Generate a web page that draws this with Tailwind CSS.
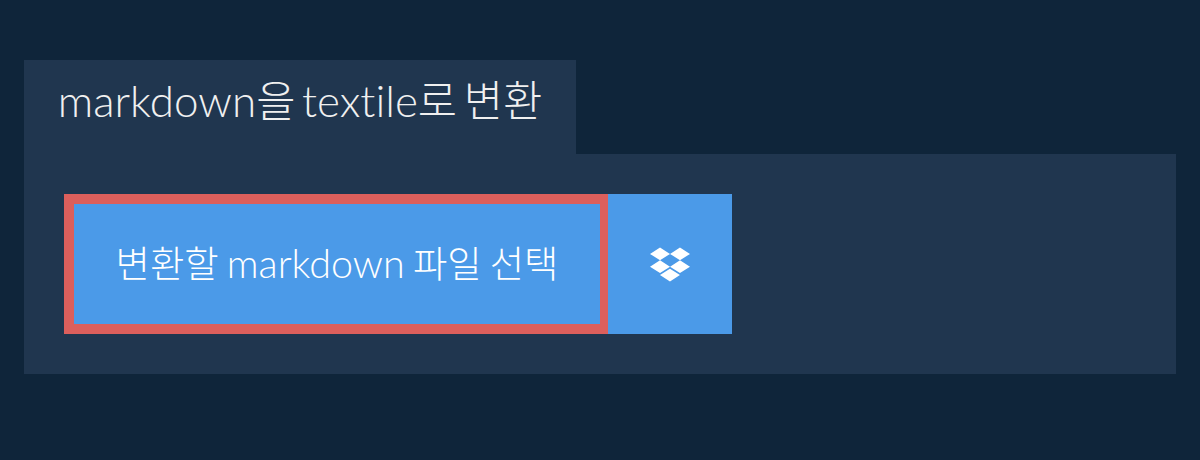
<!doctype html>
<html lang="ko">
    <head>
        <meta charset="UTF-8" />
        <title>markdown을 textile로 변환</title>
        <script src="https://cdn.jsdelivr.net/npm/@tailwindcss/browser@4"></script>
    </head>
    <body class="bg-[#0f253a] h-[460px] overflow-hidden font-['Lato','Noto_Sans_CJK_KR',sans-serif] [font-variant-ligatures:none]">
        <div class="pt-[60px] px-[24px]">
            <!-- Title tab -->
            <h1 class="w-[552px] h-[94px] bg-[#20364f] pt-[15px] text-center text-[42.67px] leading-[50px] font-light text-[#f0f0f0] [word-spacing:-5px]">
                <span class="text-[44px]">markdown</span>을 <span class="text-[44px]">textile</span>로 변환
            </h1>

            <!-- Panel -->
            <div class="h-[220px] bg-[#20364f] p-[40px] flex">
                <button class="w-[544px] h-[140px] bg-[#4b9ae8] border-[10px] border-r-[8px] border-[#dc5f5c] pb-[2px] text-[37.33px] font-light text-white [word-spacing:-2px]">
                    변환할 <span class="text-[39.5px]">markdown</span> 파일 선택
                </button>
                <button class="w-[124px] h-[140px] bg-[#4b9ae8] flex items-center justify-center">
                    <svg class="w-[40px] h-[39px]" viewBox="0 0 528 512" fill="#fff">
                        <path d="M264.4 116.3l-132 84.3 132 84.3-132 84.3L0 284.1l132.3-84.3L0 116.3 132.3 32l132.1 84.3zM131.6 395.7l132-84.3 132 84.3-132 84.3-132-84.3zm132.8-111.6l132-84.3-132-83.6L395.7 32 528 116.3l-132.3 84.3L528 284.8l-132.3 84.3-131.3-85z" />
                    </svg>
                </button>
            </div>
        </div>
    </body>
</html>
